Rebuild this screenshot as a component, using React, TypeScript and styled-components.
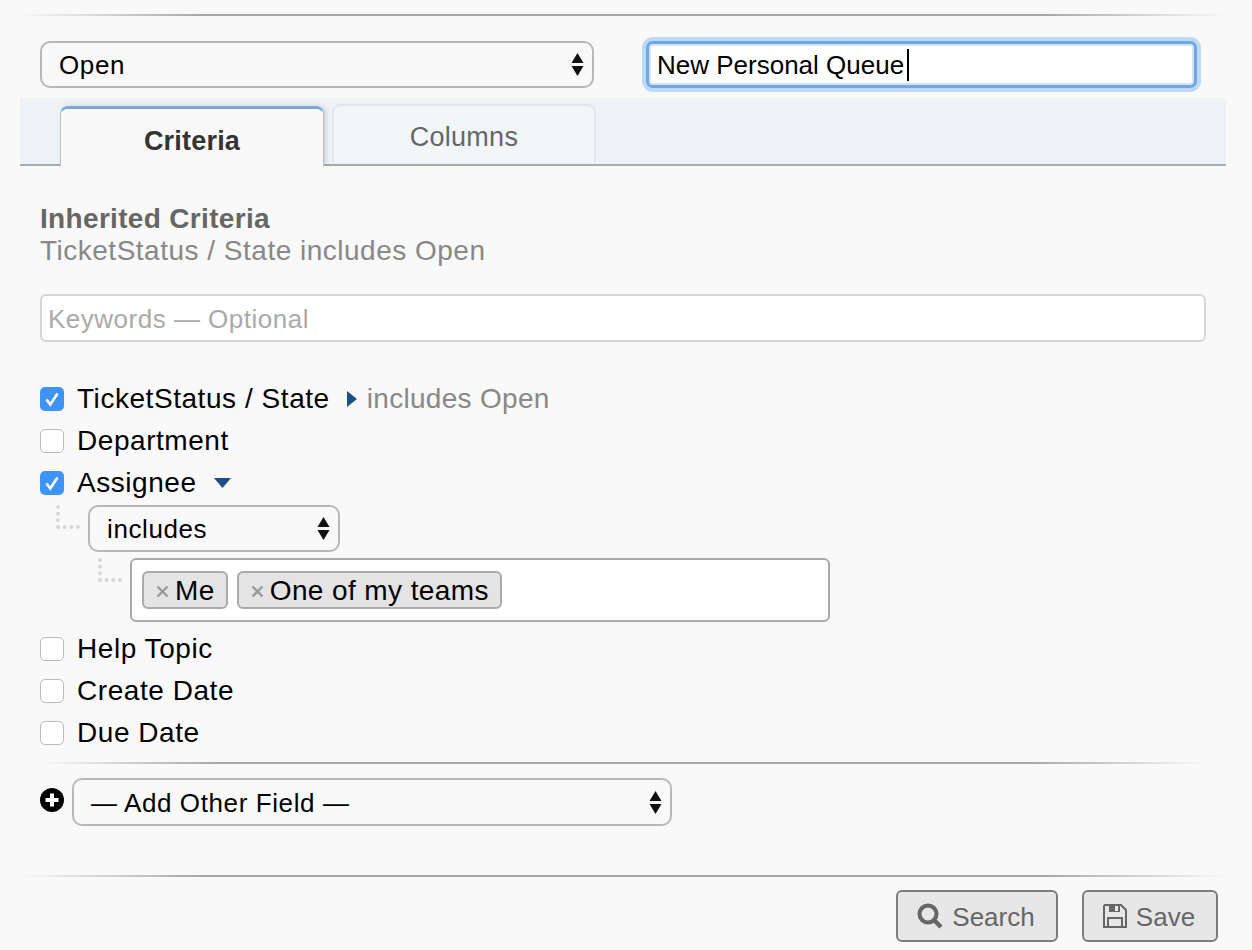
import React from "react";
import styled, { createGlobalStyle } from "styled-components";

const GlobalStyle = createGlobalStyle`
  html, body {
    margin: 0;
    padding: 0;
    background: #f9f9f9;
  }
  * {
    box-sizing: border-box;
  }
`;

const Page = styled.div`
  width: 1252px;
  height: 950px;
  overflow: hidden;
  padding: 14px 26px 0 20px;
  font-family: "Liberation Sans", Arial, sans-serif;
  font-size: 28px;
  color: #000;
`;

const Rule = styled.div<{ $top: number }>`
  height: 2px;
  margin-top: ${(p) => p.$top}px;
  background: linear-gradient(
    to right,
    rgba(165, 165, 165, 0) 0,
    #a8a8a8 15%,
    #a8a8a8 85%,
    rgba(165, 165, 165, 0) 100%
  );
`;

const TopRow = styled.div`
  display: flex;
  justify-content: space-between;
  padding: 25px 29px 0 20px;
  height: 82px;
`;

const SelectBox = styled.div<{ $width: number; $height?: number }>`
  width: ${(p) => p.$width}px;
  height: ${(p) => p.$height ?? 47}px;
  flex: none;
  display: flex;
  align-items: center;
  justify-content: space-between;
  padding: 2px 8px 0 17px;
  border: 2px solid #b8b8b8;
  border-radius: 10px;
  background: #f9f9f9;
  font-size: 26px;
  letter-spacing: 0.6px;
`;

const ArrowIcon = styled.svg`
  margin-top: -2px;
  flex: none;
`;

const Arrows = () => (
  <ArrowIcon width="13" height="25" viewBox="0 0 13 25">
    <path d="M6.5 1l6 10H.5z" fill="#111" />
    <path d="M6.5 24l6-10H.5z" fill="#111" />
  </ArrowIcon>
);

const TitleInput = styled.div`
  width: 551px;
  height: 47px;
  flex: none;
  display: flex;
  align-items: center;
  padding: 2px 0 0 8px;
  background: #fff;
  border: 3px solid #6ea6e6;
  border-radius: 7px;
  box-shadow: 0 0 0 4px #bcd9f8, inset 0 0 0 2px #d3e4f7;
  font-size: 26px;
`;

const Caret = styled.span`
  display: inline-block;
  width: 2px;
  height: 32px;
  margin: -2px 0 0 3px;
  background: #000;
`;

const TabBar = styled.div`
  height: 68px;
  display: flex;
  align-items: flex-start;
  gap: 8px;
  padding: 6px 0 0 40px;
  background: #eef2f6;
  border-bottom: 2px solid #aaa;
`;

const ActiveTab = styled.div`
  width: 264px;
  height: 60px;
  margin-top: 2px;
  display: flex;
  justify-content: center;
  padding-top: 17px;
  background: #f9f9f9;
  border: 1px solid #bcc0c4;
  border-top: 3px solid #7ba7da;
  border-bottom: none;
  border-radius: 8px 8px 0 0;
  box-shadow: 2px 0 4px rgba(120, 130, 150, 0.3);
  clip-path: inset(-6px -6px 0 -6px);
  font-weight: bold;
  font-size: 27px;
  letter-spacing: 0.2px;
  color: #333;
`;

const Tab = styled.div`
  width: 264px;
  height: 58px;
  display: flex;
  justify-content: center;
  padding-top: 16px;
  background: #f3f6f9;
  border: 2px solid #e3e6ea;
  border-bottom: none;
  border-radius: 8px 8px 0 0;
  font-size: 27px;
  letter-spacing: 0.25px;
  color: #666;
`;

const Body = styled.div`
  padding: 37px 20px 0;
`;

const InheritedTitle = styled.div`
  font-weight: bold;
  font-size: 28px;
  letter-spacing: 0.33px;
  line-height: 32px;
  color: #666;
`;

const InheritedText = styled.div`
  font-size: 28px;
  letter-spacing: 0.5px;
  line-height: 32px;
  color: #888;
`;

const KeywordInput = styled.input`
  display: block;
  width: 1166px;
  height: 48px;
  margin-top: 27px;
  padding: 3px 6px 0;
  border: 2px solid #d6d6d6;
  border-radius: 6px;
  background: #fff;
  font: inherit;
  font-size: 26px;
  letter-spacing: 0.5px;
  outline: none;
  &::placeholder {
    color: #aaa;
    opacity: 1;
  }
`;

const FieldList = styled.div`
  margin-top: 36px;
`;

const FieldRow = styled.div<{ $gapAbove?: number }>`
  height: 42px;
  margin-top: ${(p) => p.$gapAbove ?? 0}px;
  display: flex;
  align-items: center;
  letter-spacing: 0.55px;
`;

const Box = styled.span<{ $on?: boolean }>`
  width: 24px;
  height: 24px;
  flex: none;
  margin-right: 13px;
  display: flex;
  align-items: center;
  justify-content: center;
  border-radius: 5px;
  background: ${(p) => (p.$on ? "#3d94f6" : "#fff")};
  border: ${(p) => (p.$on ? "none" : "1px solid #bbb")};
`;

const Check = ({ on }: { on?: boolean }) => (
  <Box $on={on}>
    {on && (
      <svg width="18" height="18" viewBox="0 0 18 18">
        <path d="M3.5 9.5l3.8 5L14.5 3.5" fill="none" stroke="#fff" strokeWidth="2.6" />
      </svg>
    )}
  </Box>
);

const Summary = styled.span`
  color: #888;
  margin-left: 10px;
  letter-spacing: 0.3px;
`;

const Disclosure = styled.svg`
  margin-left: 17px;
  flex: none;
`;

const Nested = styled.div<{ $indent: number; $top: number }>`
  display: flex;
  align-items: flex-start;
  margin-left: ${(p) => p.$indent}px;
  margin-top: ${(p) => p.$top}px;
`;

const Connector = styled.div`
  width: 24px;
  height: 24px;
  margin: 0 8px 0 0;
  flex: none;
  border-left: 4px dotted #d8d8d8;
  border-bottom: 4px dotted #d8d8d8;
`;

const TagBox = styled.div`
  width: 700px;
  height: 64px;
  display: flex;
  align-items: center;
  gap: 9px;
  padding: 0 10px;
  background: #fff;
  border: 2px solid #aaa;
  border-radius: 6px;
`;

const Tag = styled.div`
  height: 38px;
  display: flex;
  align-items: center;
  padding: 2px 11px 0 12px;
  background: #e4e4e4;
  border: 2px solid #aaa;
  border-radius: 6px;
  letter-spacing: 0.4px;
`;

const TagX = styled.svg`
  margin-right: 6px;
  flex: none;
`;

const TagClose = () => (
  <TagX width="13" height="13" viewBox="0 0 13 13">
    <path d="M1.5 1.5l10 10M11.5 1.5l-10 10" stroke="#999" strokeWidth="2.4" />
  </TagX>
);

const AddRow = styled.div`
  display: flex;
  align-items: center;
  gap: 8px;
  margin-top: 14px;
`;

const PlusIcon = styled.svg`
  flex: none;
  margin-top: -4px;
`;

const Footer = styled.div`
  display: flex;
  justify-content: flex-end;
  gap: 24px;
  margin-top: 13px;
  padding-right: 8px;
`;

const Button = styled.div<{ $width: number }>`
  width: ${(p) => p.$width}px;
  height: 52px;
  display: flex;
  align-items: center;
  justify-content: center;
  gap: 9px;
  padding-top: 2px;
  background: #e7e7e7;
  border: 2px solid #7d7d7d;
  border-radius: 6px;
  font-size: 26px;
  color: #666;
`;

const ButtonIcon = styled.svg`
  margin: -3px 0 0 -2px;
  flex: none;
`;

export default function App() {
  return (
    <Page>
      <GlobalStyle />
      <Rule $top={0} />
      <TopRow>
        <SelectBox $width={554}>
          Open
          <Arrows />
        </SelectBox>
        <TitleInput>
          New Personal Queue
          <Caret />
        </TitleInput>
      </TopRow>
      <TabBar>
        <ActiveTab>Criteria</ActiveTab>
        <Tab>Columns</Tab>
      </TabBar>
      <Body>
        <InheritedTitle>Inherited Criteria</InheritedTitle>
        <InheritedText>TicketStatus / State includes Open</InheritedText>
        <KeywordInput placeholder="Keywords — Optional" readOnly />
        <FieldList>
          <FieldRow>
            <Check on />
            TicketStatus / State
            <Disclosure width="10" height="16" viewBox="0 0 10 16">
              <path d="M0 0l10 8-10 8z" fill="#1c4f86" />
            </Disclosure>
            <Summary>includes Open</Summary>
          </FieldRow>
          <FieldRow>
            <Check />
            Department
          </FieldRow>
          <FieldRow>
            <Check on />
            Assignee
            <Disclosure width="17" height="10" viewBox="0 0 17 10">
              <path d="M0 0h17l-8.5 10z" fill="#1c4f86" />
            </Disclosure>
          </FieldRow>
          <Nested $indent={16} $top={1}>
            <Connector />
            <SelectBox $width={252}>
              includes
              <Arrows />
            </SelectBox>
          </Nested>
          <Nested $indent={58} $top={6}>
            <Connector />
            <TagBox>
              <Tag>
                <TagClose />
                Me
              </Tag>
              <Tag>
                <TagClose />
                One of my teams
              </Tag>
            </TagBox>
          </Nested>
          <FieldRow $gapAbove={6}>
            <Check />
            Help Topic
          </FieldRow>
          <FieldRow>
            <Check />
            Create Date
          </FieldRow>
          <FieldRow>
            <Check />
            Due Date
          </FieldRow>
        </FieldList>
        <Rule $top={8} />
        <AddRow>
          <PlusIcon width="24" height="24" viewBox="0 0 24 24">
            <circle cx="12" cy="12" r="12" fill="#000" />
            <path d="M12 5.5v13M5.5 12h13" stroke="#fff" strokeWidth="4" />
          </PlusIcon>
          <SelectBox $width={600} $height={48}>
            — Add Other Field —
            <Arrows />
          </SelectBox>
        </AddRow>
      </Body>
      <Rule $top={49} />
      <Footer>
        <Button $width={162}>
          <ButtonIcon width="26" height="26" viewBox="0 0 26 26">
            <circle cx="11" cy="11" r="8.5" fill="none" stroke="#666" strokeWidth="4" />
            <path d="M17 17l7 7" stroke="#666" strokeWidth="4.5" />
          </ButtonIcon>
          Search
        </Button>
        <Button $width={136}>
          <ButtonIcon width="24" height="24" viewBox="0 0 24 24">
            <path d="M2 1h16l5 5v17H1V2z" fill="none" stroke="#666" strokeWidth="2" />
            <path d="M6 1h11v7H6z" fill="#666" />
            <path d="M12 2h3v5h-3z" fill="#e7e7e7" />
            <path d="M5 14h14v9H5z" fill="none" stroke="#666" strokeWidth="2" />
          </ButtonIcon>
          Save
        </Button>
      </Footer>
    </Page>
  );
}
